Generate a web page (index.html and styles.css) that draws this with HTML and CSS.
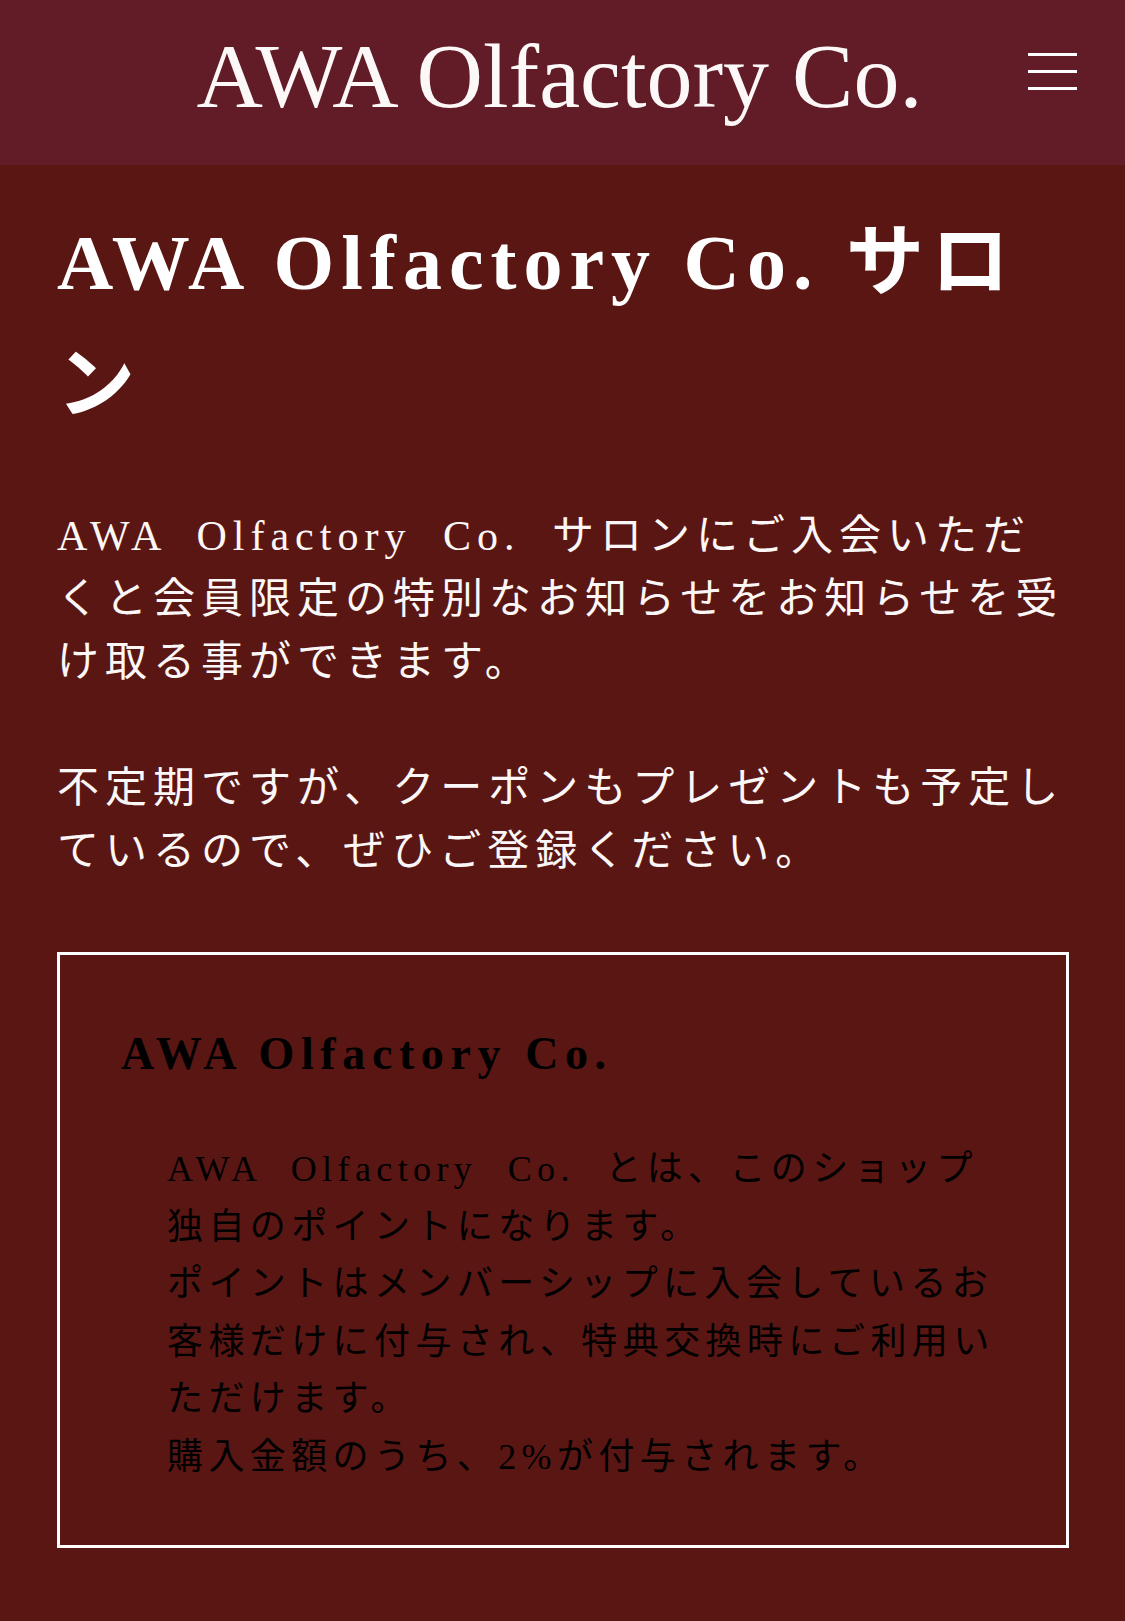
FILE: index.html
```html
<!DOCTYPE html>
<html lang="ja">
<head>
<meta charset="utf-8">
<title>AWA Olfactory Co. サロン</title>
<link rel="stylesheet" href="styles.css">
</head>
<body>
<header class="site-header">
  <div class="header-side"></div>
  <a class="logo" href="#">AWA Olfactory Co.</a>
  <button class="menu-btn" type="button" aria-label="menu"><span></span><span></span><span></span></button>
</header>
<main class="content">
  <h1 class="page-title">AWA Olfactory Co. サロン</h1>
  <p class="lead">AWA Olfactory Co. サロンにご入会いただ<br>くと会員限定の特別なお知らせをお知らせを受<br>け取る事ができます。</p>
  <p class="lead">不定期ですが、クーポンもプレゼントも予定し<br>ているので、ぜひご登録ください。</p>
  <section class="point-box">
    <h2 class="point-title">AWA Olfactory Co.</h2>
    <p class="point-text">AWA Olfactory Co. とは、このショップ<br>独自のポイントになります。<br>ポイントはメンバーシップに入会しているお<br>客様だけに付与され、特典交換時にご利用い<br>ただけます。<br>購入金額のうち、2%が付与されます。</p>
  </section>
</main>
</body>
</html>
```

FILE: styles.css
```css
* {
  box-sizing: border-box;
}

html, body {
  margin: 0;
  padding: 0;
}

body {
  background: #5a1613;
  font-family: "Liberation Serif", "Noto Sans CJK JP", serif;
  color: #ffffff;
  min-height: 1621px;
}

.site-header {
  height: 165px;
  background: #621c28;
  display: grid;
  grid-template-columns: 1fr auto 1fr;
  align-items: start;
  padding-top: 30px;
}

.logo {
  font-family: "Liberation Serif", serif;
  font-size: 92px;
  line-height: 92px;
  margin-right: 6px;
  color: #fdf8f8;
  text-decoration: none;
  white-space: nowrap;
}

.menu-btn {
  justify-self: end;
  margin: 23px 48px 0 0;
  width: 49px;
  height: 37px;
  padding: 0;
  border: 0;
  background: none;
  display: flex;
  flex-direction: column;
  justify-content: space-between;
  cursor: pointer;
}

.menu-btn span {
  display: block;
  height: 3px;
  width: 100%;
  background: #ffffff;
}

.content {
  padding: 0 56px 0 57px;
}

.page-title {
  margin: 37px 0 0;
  font-size: 78px;
  line-height: 122px;
  font-weight: bold;
  letter-spacing: 7px;
  color: #ffffff;
}

.lead {
  margin: 59px 0 0;
  font-size: 42px;
  line-height: 63px;
  letter-spacing: 6px;
  word-spacing: 15px;
  white-space: nowrap;
  color: #fbf7f7;
}

.lead + .lead {
  margin-top: 63px;
}

.point-box {
  margin-top: 69px;
  border: 3px solid #ffffff;
  padding: 60px 56px 58px 61px;
}

.point-title {
  margin: 6px 0 0;
  font-size: 46px;
  line-height: 66px;
  font-weight: bold;
  letter-spacing: 6.6px;
  color: #000000;
}

.point-text {
  margin: 54px 0 0 46px;
  font-size: 36px;
  line-height: 57.6px;
  letter-spacing: 5.4px;
  word-spacing: 16px;
  white-space: nowrap;
  color: #000000;
}
```
